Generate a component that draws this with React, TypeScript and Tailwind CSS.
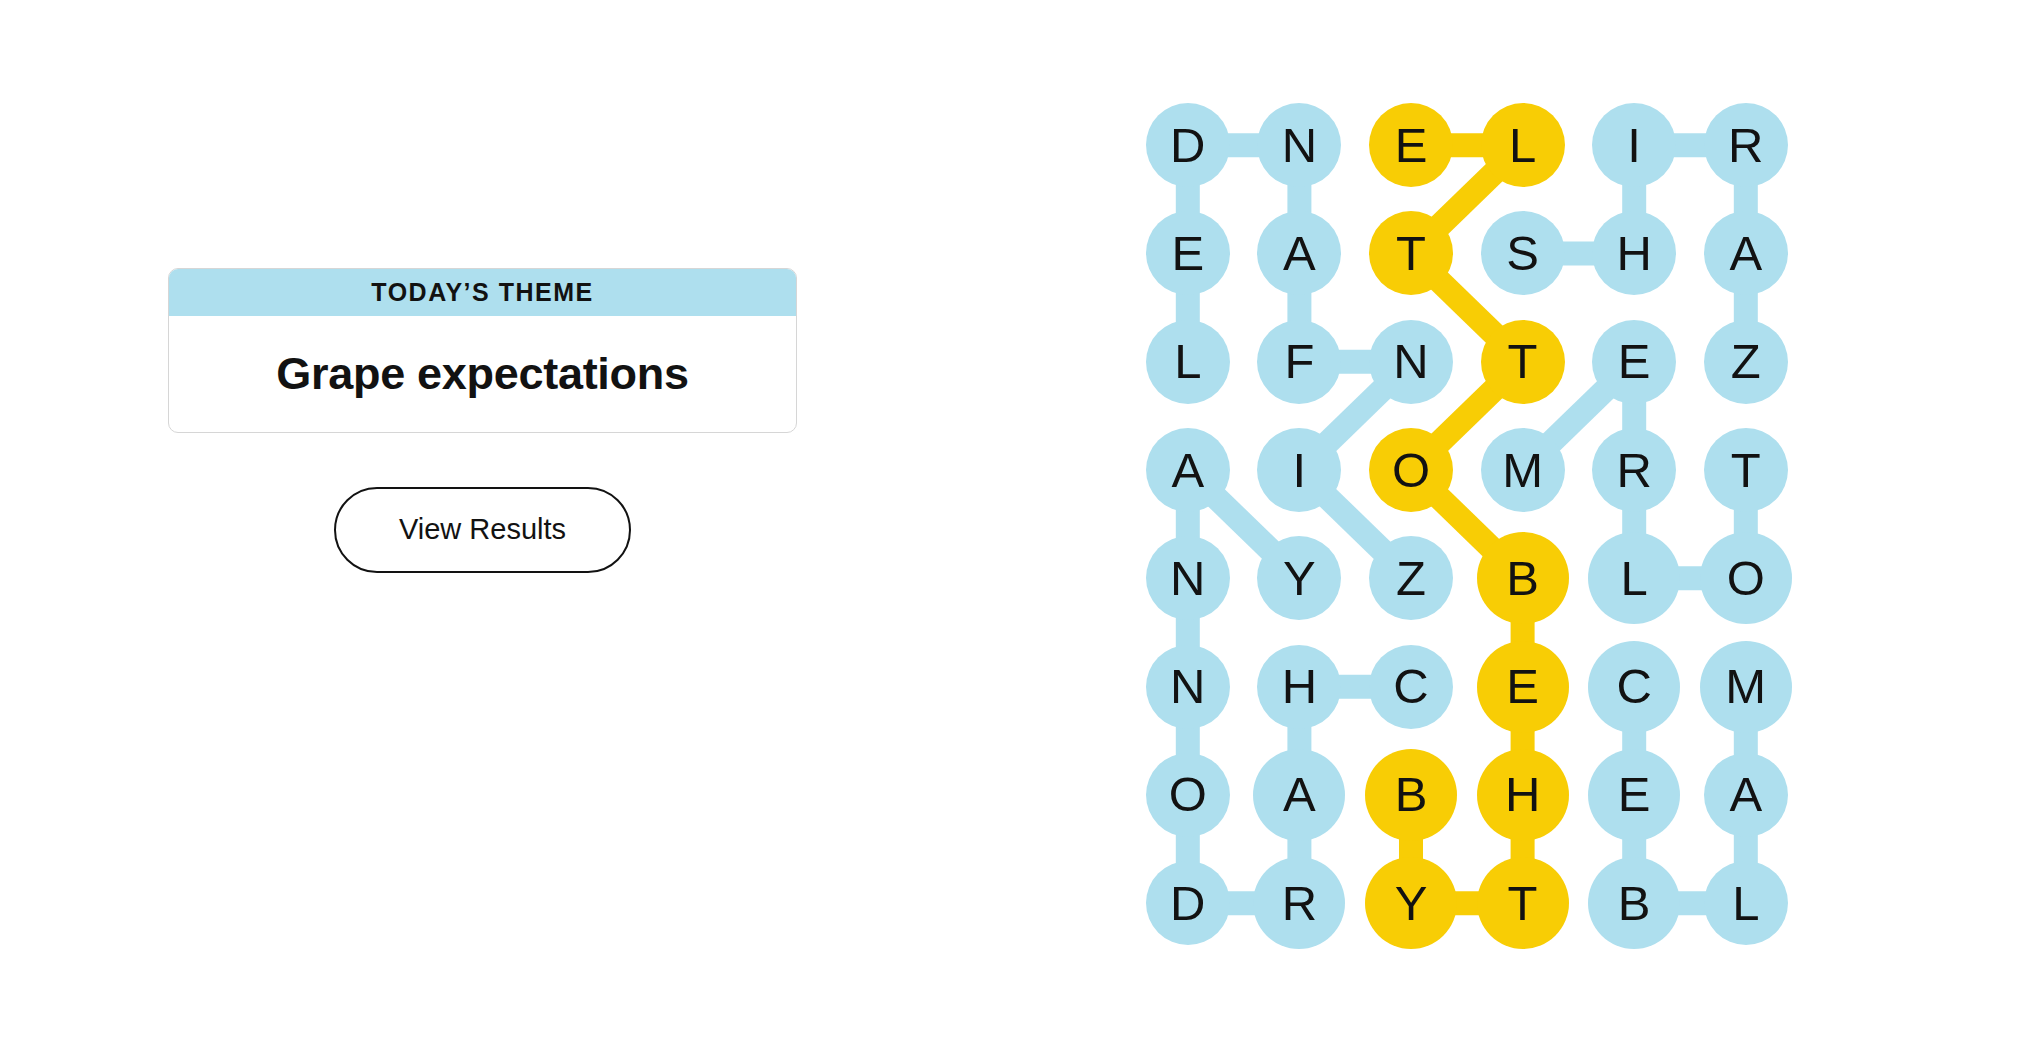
import React from 'react';

const BLUE = '#aedfee';
const YELLOW = '#f8cd05';

const CELL_W = 111.6;
const CELL_H = 108.3;

const letters = [
  'DNELIR',
  'EATSHA',
  'LFNTEZ',
  'AIOMRT',
  'NYZBLO',
  'NHCECM',
  'OABHEA',
  'DRYTBL',
];

type P = [number, number];

// each found word as a path of [row, col]
const words: { path: P[]; spangram?: boolean }[] = [
  { path: [[4, 2], [3, 1], [2, 2], [2, 1], [1, 1], [0, 1], [0, 0], [1, 0], [2, 0]] },
  { path: [[5, 2], [5, 1], [6, 1], [7, 1], [7, 0], [6, 0], [5, 0], [4, 0], [3, 0], [4, 1]] },
  { path: [[1, 3], [1, 4], [0, 4], [0, 5], [1, 5], [2, 5]] },
  { path: [[3, 3], [2, 4], [3, 4], [4, 4], [4, 5], [3, 5]] },
  { path: [[5, 5], [6, 5], [7, 5], [7, 4], [6, 4], [5, 4]] },
  {
    path: [[6, 2], [7, 2], [7, 3], [6, 3], [5, 3], [4, 3], [3, 2], [2, 3], [1, 2], [0, 3], [0, 2]],
    spangram: true,
  },
];

const yellowCells = new Set(words.filter((w) => w.spangram).flatMap((w) => w.path.map(([r, c]) => `${r}-${c}`)));

// circles in the screenshot are not all the same size
const bigCells = new Set(['7-1', '7-2', '7-3', '6-2', '6-3', '5-3', '5-5', '7-4', '5-4', '4-3', '4-4', '4-5', '6-1', '6-4']);

const cx = (c: number) => c * CELL_W + CELL_W / 2;
const cy = (r: number) => r * CELL_H + CELL_H / 2;

const Board: React.FC = () => {
  return (
    <div className="relative w-[669.6px] h-[866.4px]">
      <svg className="absolute inset-0" width={669.6} height={866.4}>
        {words.map((w, i) =>
          w.path.slice(1).map(([r, c], j) => {
            const [pr, pc] = w.path[j];
            return (
              <line
                key={`${i}-${j}`}
                x1={cx(pc)}
                y1={cy(pr)}
                x2={cx(c)}
                y2={cy(r)}
                stroke={w.spangram ? YELLOW : BLUE}
                strokeWidth={24}
              />
            );
          })
        )}
      </svg>
      <div className="relative grid grid-cols-[repeat(6,111.6px)] grid-rows-[repeat(8,108.3px)]">
        {letters.map((row, r) =>
          row.split('').map((ch, c) => {
            const key = `${r}-${c}`;
            const yellow = yellowCells.has(key);
            const big = bigCells.has(key);
            return (
              <div key={key} className="flex items-center justify-center">
                <div
                  className={`flex items-center justify-center rounded-full text-[49px] leading-none text-[#121212] ${
                    big ? 'w-[92px] h-[92px]' : 'w-[84px] h-[84px]'
                  } ${yellow ? 'bg-[#f8cd05]' : 'bg-[#aedfee]'}`}
                  style={{ fontFamily: '"Liberation Sans", Arial, sans-serif' }}
                >
                  {ch}
                </div>
              </div>
            );
          })
        )}
      </div>
    </div>
  );
};

export default function App() {
  return (
    <div className="w-[2027px] h-[1040px] bg-white flex overflow-hidden" style={{ fontFamily: '"Liberation Sans", Arial, sans-serif' }}>
      <div className="pl-[168px] pt-[268px] flex flex-col items-center">
        <div className="w-[629px] h-[165px] rounded-[10px] border-[1.5px] border-[#d6d6d6] overflow-hidden flex flex-col">
          <div className="h-[47px] shrink-0 bg-[#aedfee] flex items-center justify-center">
            <span className="text-[25px] font-bold tracking-[1.5px] text-[#121212]">TODAY’S THEME</span>
          </div>
          <div className="flex-1 flex items-center justify-center">
            <span className="text-[45px] font-bold text-[#121212] tracking-[-0.3px]">Grape expectations</span>
          </div>
        </div>
        <button className="mt-[54px] w-[297px] h-[86px] rounded-full border-2 border-[#121212] bg-white text-[29px] text-[#121212]">
          View Results
        </button>
      </div>
      <div className="ml-[335px] pt-[91px]">
        <Board />
      </div>
    </div>
  );
}
